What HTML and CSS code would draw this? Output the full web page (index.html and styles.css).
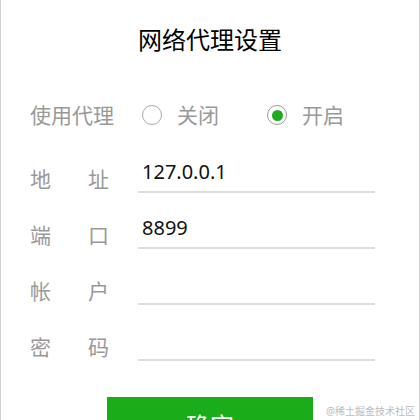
FILE: index.html
```html
<!DOCTYPE html>
<html lang="zh-CN">
<head>
    <meta charset="UTF-8">
    <meta name="viewport" content="width=device-width, initial-scale=1.0">
    <title>网络代理设置</title>
    <link rel="stylesheet" href="styles.css">
</head>
<body>

<div class="page">
    <h1 class="title">网络代理设置</h1>

    <!-- proxy on/off switch -->
    <div class="row radio-row">
        <span class="label">使用代理</span>
        <div class="options">
            <label class="option">
                <input type="radio" name="proxy" value="off">
                <span class="dot"></span>
                关闭
            </label>
            <label class="option">
                <input type="radio" name="proxy" value="on" checked>
                <span class="dot"></span>
                开启
            </label>
        </div>
    </div>

    <div class="row field">
        <span class="label short">地 址</span>
        <input type="text" class="text" value="127.0.0.1">
    </div>
    <div class="row field">
        <span class="label short">端 口</span>
        <input type="text" class="text" value="8899">
    </div>
    <div class="row field">
        <span class="label short">帐 户</span>
        <input type="text" class="text">
    </div>
    <div class="row field">
        <span class="label short">密 码</span>
        <input type="password" class="text">
    </div>

    <button class="confirm">确定</button>

    <span class="mark">@稀土掘金技术社区</span>
</div>

</body>
</html>
```

FILE: styles.css
```css
* {
    margin: 0;
    padding: 0;
    box-sizing: border-box;
    font-family: "Noto Sans", "Noto Sans CJK SC", sans-serif;
}
body {
    background: white;
    overflow: hidden;
}
.page {
    position: relative;
    height: 420px;
    overflow: hidden;
    border-left: 1px solid #cfcfcf;
    border-right: 1px solid #cfcfcf;
    padding: 24px 0 0 29px;
}
.title {
    margin-left: -29px;
    font-size: 24px;
    line-height: 32px;
    font-weight: normal;
    color: #000;
    text-align: center;
}
.row {
    display: flex;
    gap: 24px;
}
.label {
    width: 84px;
    font-size: 21px;
    line-height: 28px;
    color: #999;
    text-align-last: justify;
}
.label.short {
    width: 79px;
    margin-right: 5px;
}
.radio-row {
    margin: 39px 0 2px;
    height: 40px;
    align-items: center;
}
.options {
    display: flex;
    gap: 48px;
    margin-left: 4px;
}
.option {
    display: flex;
    align-items: center;
    gap: 15px;
    font-size: 21px;
    line-height: 28px;
    color: #999;
    cursor: pointer;
}
.option input {
    display: none;
}
.dot {
    width: 20px;
    height: 20px;
    border: 1px solid #aaa;
    border-radius: 50%;
    display: flex;
    align-items: center;
    justify-content: center;
}
.option input:checked + .dot {
    border-color: #999;
}
.option input:checked + .dot::after {
    content: "";
    width: 11px;
    height: 11px;
    border-radius: 50%;
    background: #1aad19;
}
.field {
    height: 56px;
    align-items: flex-end;
}
.text {
    width: 237px;
    height: 41px;
    padding: 0 4px;
    border: none;
    border-bottom: 2px solid #ddd;
    outline: none;
    font-size: 20px;
    color: #111;
    background: transparent;
}
.confirm {
    display: block;
    width: 206px;
    height: 54px;
    margin: 36px 0 0 77px;
    border: none;
    background: #1aad19;
    color: white;
    font-size: 24px;
    cursor: pointer;
}
.mark {
    position: absolute;
    right: 4px;
    bottom: 2px;
    font-size: 10px;
    line-height: 14px;
    color: #bbb;
}
```
